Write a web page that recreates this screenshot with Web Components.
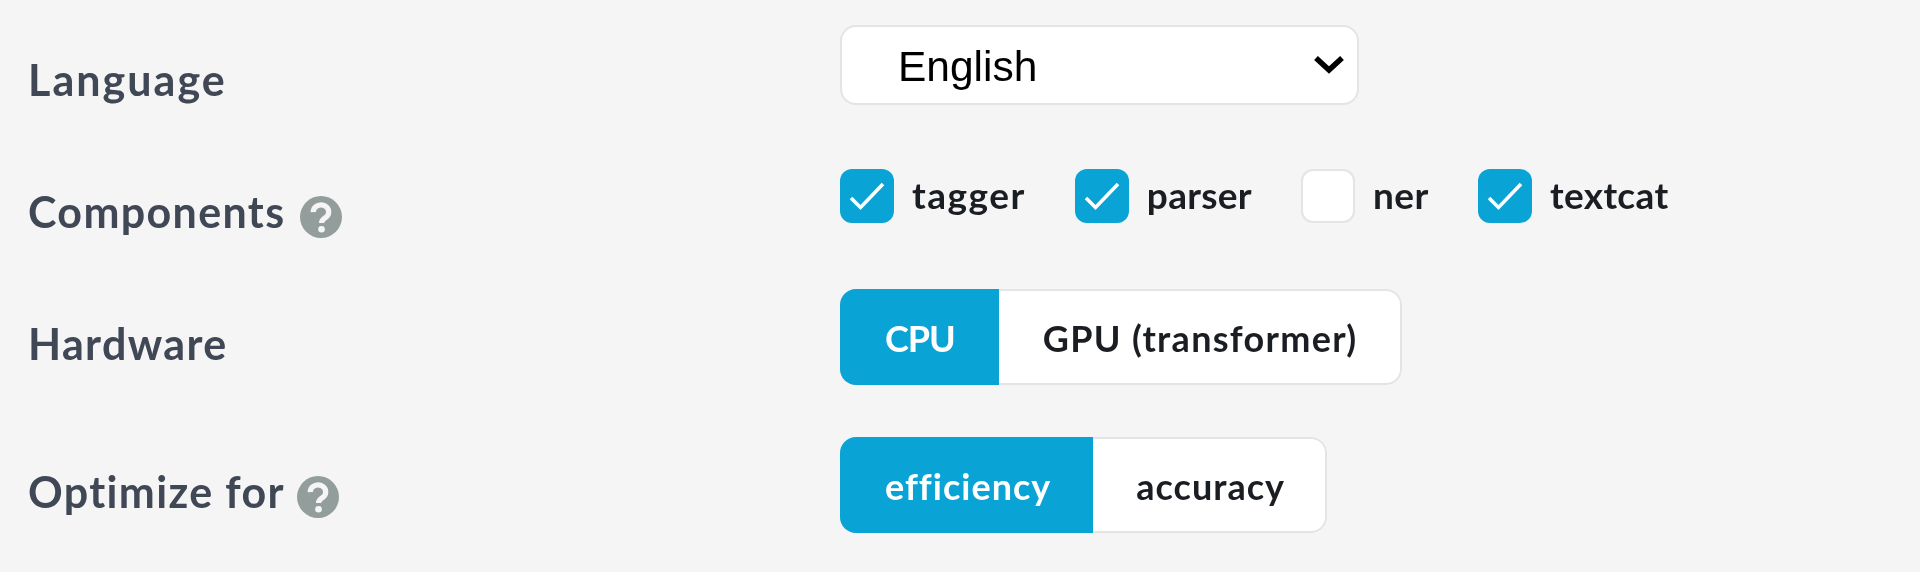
<!DOCTYPE html>
<html>
<head>
<meta charset="utf-8">
<style>
  html, body { margin: 0; background: #f5f5f5; }
  body { height: 572px; overflow: hidden; }
</style>
</head>
<body>
<quick-start>
  <quick-row label-top="54" control-top="25" style="height:137px;--label-spacing:2.05px">
    <span slot="label">Language</span>
    <lang-select>English</lang-select>
  </quick-row>
  <quick-row label-top="49" control-top="32" style="height:132px">
    <span slot="label">Components<help-icon></help-icon></span>
    <check-group>
      <check-option checked style="--spacing:1.5px">tagger</check-option>
      <check-option checked style="--spacing:.3px">parser</check-option>
      <check-option style="--spacing:.5px">ner</check-option>
      <check-option checked style="--spacing:.35px">textcat</check-option>
    </check-group>
  </quick-row>
  <quick-row label-top="49" control-top="20" style="height:148px">
    <span slot="label">Hardware</span>
    <toggle-group>
      <toggle-option active style="--spacing:-1px;--pad-right:44px">CPU</toggle-option>
      <toggle-option style="--spacing:1.3px;--pad-left:44px;--pad-right:45px">GPU (transformer)</toggle-option>
    </toggle-group>
  </quick-row>
  <quick-row label-top="49" control-top="20">
    <span slot="label">Optimize for<help-icon style="margin-left:12px"></help-icon></span>
    <toggle-group>
      <toggle-option active style="--pad-right:42px">efficiency</toggle-option>
      <toggle-option style="--pad-right:42px">accuracy</toggle-option>
    </toggle-group>
  </quick-row>
</quick-start>

<script>
class QuickStart extends HTMLElement {
  constructor() {
    super();
    this.attachShadow({ mode: 'open' }).innerHTML = `
      <style>
        :host { display: flex; flex-direction: column; font-family: 'Lato', sans-serif; filter: blur(.5px); }
      </style>
      <slot></slot>`;
  }
}

class QuickRow extends HTMLElement {
  constructor() {
    super();
    this.attachShadow({ mode: 'open' }).innerHTML = `
      <style>
        :host { display: grid; grid-template-columns: 840px auto; align-items: start; }
        .label {
          padding: var(--label-top, 0) 0 0 28px;
          font: bold 43px/1.2 'Lato', sans-serif;
          letter-spacing: var(--label-spacing, 1.35px);
          color: #404755;
        }
        .control { padding-top: var(--control-top, 0); }
      </style>
      <div class="label"><slot name="label"></slot></div>
      <div class="control"><slot></slot></div>`;
  }

  connectedCallback() {
    this.style.setProperty('--label-top', this.getAttribute('label-top') + 'px');
    this.style.setProperty('--control-top', this.getAttribute('control-top') + 'px');
  }
}

class HelpIcon extends HTMLElement {
  constructor() {
    super();
    this.attachShadow({ mode: 'open' }).innerHTML = `
      <style>
        :host { display: inline-block; width: 42px; height: 42px; margin-left: 15px; vertical-align: -10px; }
        svg { display: block; width: 100%; height: 100%; }
      </style>
      <svg viewBox="0 0 24 24">
        <circle cx="12" cy="12" r="12" fill="#939d9b"/>
        <path d="M7.6 9.2a4.4 4 0 1 1 6.9 3.2c-1.4 1-2.2 1.6-2.2 3" fill="none" stroke="#f5f5f5" stroke-width="3"/>
        <circle cx="12.3" cy="19" r="1.9" fill="#f5f5f5"/>
      </svg>`;
  }
}

class LangSelect extends HTMLElement {
  constructor() {
    super();
    this.attachShadow({ mode: 'open' }).innerHTML = `
      <style>
        :host {
          display: flex; align-items: center; justify-content: space-between;
          box-sizing: border-box; width: 519px; height: 80px;
          padding: 4px 12px 0 56px;
          background: #fff; border: 2px solid #e4e4e4; border-radius: 16px;
          font: 42.5px 'Liberation Sans', Arial, sans-serif; color: #000;
        }
        svg { width: 32px; height: 22px; margin-top: -6px; }
      </style>
      <span><slot></slot></span>
      <svg viewBox="0 0 32 22"><path d="M3 5l13 12L29 5" fill="none" stroke="#000" stroke-width="5.5"/></svg>`;
  }
}

class CheckGroup extends HTMLElement {
  constructor() {
    super();
    this.attachShadow({ mode: 'open' }).innerHTML = `
      <style>
        :host { display: flex; gap: 49px; }
      </style>
      <slot></slot>`;
  }
}

class CheckOption extends HTMLElement {
  constructor() {
    super();
    const mark = this.hasAttribute('checked')
      ? '<svg viewBox="0 0 54 54"><path d="M11 29l9.500 9.500L43 15" fill="none" stroke="#fff" stroke-width="3.6"/></svg>'
      : '';
    this.attachShadow({ mode: 'open' }).innerHTML = `
      <style>
        :host {
          display: flex; align-items: flex-start; gap: 18px;
          font: bold 37px/52px 'Lato', sans-serif; letter-spacing: var(--spacing, .5px); color: #1a1e23;
        }
        .box {
          box-sizing: border-box; width: 54px; height: 54px; border-radius: 12px;
          background: #fff; border: 2px solid #e4e4e4;
        }
        :host([checked]) .box { background: #09a3d5; border: 0; }
        svg { display: block; }
      </style>
      <div class="box">${mark}</div>
      <span><slot></slot></span>`;
  }
}

class ToggleGroup extends HTMLElement {
  constructor() {
    super();
    this.attachShadow({ mode: 'open' }).innerHTML = `
      <style>
        :host {
          display: inline-flex; height: 96px; overflow: hidden;
          background: #fff; border-radius: 16px;
          box-shadow: inset 0 0 0 2px #e4e4e4;
        }
      </style>
      <slot></slot>`;
  }
}

class ToggleOption extends HTMLElement {
  constructor() {
    super();
    this.attachShadow({ mode: 'open' }).innerHTML = `
      <style>
        :host {
          display: flex; align-items: center;
          padding: 2px var(--pad-right, 43px) 0 var(--pad-left, 43px);
          font: bold 36px 'Lato', sans-serif; letter-spacing: var(--spacing, 1px); color: #1a1e23;
        }
        :host([active]) { background: #09a3d5; color: #fff; padding-left: 45px; }
      </style>
      <slot></slot>`;
  }
}

customElements.define('quick-start', QuickStart);
customElements.define('quick-row', QuickRow);
customElements.define('help-icon', HelpIcon);
customElements.define('lang-select', LangSelect);
customElements.define('check-group', CheckGroup);
customElements.define('check-option', CheckOption);
customElements.define('toggle-group', ToggleGroup);
customElements.define('toggle-option', ToggleOption);
</script>
</body>
</html>
